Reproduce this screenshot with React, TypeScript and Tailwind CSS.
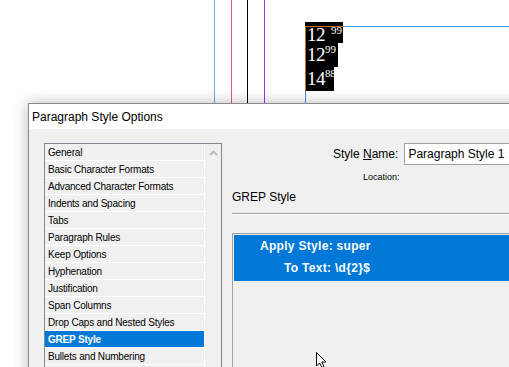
import React from "react";

const items = [
  "General",
  "Basic Character Formats",
  "Advanced Character Formats",
  "Indents and Spacing",
  "Tabs",
  "Paragraph Rules",
  "Keep Options",
  "Hyphenation",
  "Justification",
  "Span Columns",
  "Drop Caps and Nested Styles",
  "GREP Style",
  "Bullets and Numbering",
];

const ui = { fontFamily: '"Liberation Sans", Arial, sans-serif' };
const serif = { fontFamily: '"Liberation Serif", "Times New Roman", serif' };

export default function App() {
  return (
    <div className="relative h-[367px] w-[509px] overflow-hidden bg-white" style={ui}>
      {/* layout canvas guides */}
      <div className="absolute left-[214px] top-0 h-[103px] w-px bg-[#6aaee6]" />
      <div className="absolute left-[231px] top-0 h-[103px] w-px bg-[#e05a6e]" />
      <div className="absolute left-[247px] top-0 h-[103px] w-px bg-black" />
      <div className="absolute left-[264px] top-0 h-[103px] w-px bg-[#9b30ff]" />
      <div className="absolute left-[343px] top-[26px] h-px w-[170px] bg-[#4a90e2]" />
      <div className="absolute left-[305px] top-[91px] h-[12px] w-px bg-[#4a90e2]" />

      {/* text frame */}
      <div className="absolute left-[305px] top-[22px] flex flex-col items-start text-white" style={serif}>
        <div className="h-[21px] w-[38px] bg-black pt-[4px]">
          <div className="flex h-[17px] items-start border-l border-t border-[#c07020] pl-[1px]">
            <span className="-mt-[2px] text-[19px] leading-none tracking-[-0.5px]">12</span>
            <span className="-mt-[2px] ml-[6px] text-[11px] leading-none">99</span>
          </div>
        </div>
        <div className="flex h-[24px] w-[33px] items-start border-l border-[#c07020] bg-black pl-[1px] pt-[2px]">
          <span className="text-[19px] leading-none tracking-[-0.5px]">12</span>
          <span className="mt-[-1px] text-[11px] leading-none">99</span>
        </div>
        <div className="flex h-[24px] w-[29px] items-start border-l border-[#c07020] bg-black pl-[1px] pt-[2px]">
          <span className="text-[19px] leading-none tracking-[-0.5px]">14</span>
          <span className="mt-[-1px] text-[11px] leading-none tracking-[-0.3px]">88</span>
        </div>
      </div>

      {/* dialog window */}
      <div className="absolute left-[28px] top-[103px] flex h-[280px] w-[500px] flex-col border-l border-t border-[#8a8a8a] bg-[#f0f0f0] shadow-[0_0_14px_rgba(0,0,0,0.28)]">
        <div className="flex h-[26px] items-center bg-white pl-[3px] text-[12px] text-black">
          Paragraph Style Options
        </div>
        <div className="flex pl-[15px] pt-[14px]">
          <div className="flex h-[240px] w-[178px] border border-[#828790] bg-[#f0f0f0]">
            <div className="flex w-[159px] flex-col">
              {items.map((t) => (
                <div
                  key={t}
                  className={
                    t === "GREP Style"
                      ? "flex h-[17px] shrink-0 items-center border-b border-white bg-[#0078d7] pl-[3px] pt-px text-[10px] font-bold tracking-[-0.2px] text-white"
                      : "flex h-[17px] shrink-0 items-center border-b border-white pl-[3px] pt-px text-[10px] tracking-[-0.2px] text-black"
                  }
                >
                  {t}
                </div>
              ))}
            </div>
            <div className="flex w-[17px] justify-center border-l border-white pt-[6px]">
              <svg width="9" height="6" viewBox="0 0 9 6">
                <path d="M1 5 L4.5 1.5 L8 5" fill="none" stroke="#b8b8b8" strokeWidth="1.8" />
              </svg>
            </div>
          </div>

          <div className="ml-[10px] flex flex-1 flex-col">
            <div className="flex h-[22px] items-center">
              <span className="ml-[101px] text-[12px] text-black">
                Style <span className="underline">N</span>ame:
              </span>
              <div className="ml-[6px] flex h-[22px] flex-1 items-center border border-[#a0a0a0] bg-white pl-[3px] text-[12px] text-black">
                Paragraph Style 1
              </div>
            </div>
            <div className="ml-[131px] mt-[6px] text-[9px] text-black">Location:</div>
            <div className="mt-[3px] text-[12px] text-black">GREP Style</div>
            <div className="mt-[7px] h-px bg-[#a0a0a0]" />
            <div className="h-px bg-white" />
            <div className="mt-[18px] flex h-[140px] flex-col border border-[#a0a0a0] p-[1px]">
              <div className="flex h-[46px] flex-col bg-[#0078d7] text-[12px] font-bold tracking-[0.3px] text-white">
                <div className="flex h-[22px] items-center pl-[26px]">Apply Style: super</div>
                <div className="flex h-[22px] items-center pl-[50px]">To Text: \d{"{"}2{"}"}$</div>
              </div>
            </div>
          </div>
        </div>
      </div>

      {/* mouse pointer */}
      <svg className="absolute left-[316px] top-[352px]" width="12" height="16" viewBox="0 0 12 16">
        <path d="M0.5 0.5 L0.5 14 L3.5 11 L6 15.5 L8 14.5 L5.8 10 L10 10 Z" fill="white" stroke="black" strokeWidth="1" />
      </svg>
    </div>
  );
}
